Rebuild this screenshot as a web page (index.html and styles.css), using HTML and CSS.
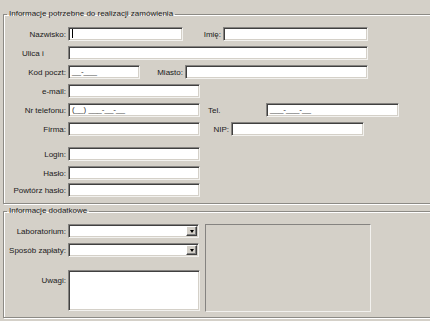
FILE: index.html
```html
<!DOCTYPE html>
<html lang="pl">
<head>
<meta charset="utf-8">
<title>Formularz zamówienia</title>
<link rel="stylesheet" href="styles.css">
</head>
<body>
<form class="form">
  <fieldset class="group group-main">
    <legend class="legend">Informacje potrzebne do realizacji zamówienia</legend>
    <div class="row">
      <label class="lbl">Nazwisko:</label>
      <div class="field w115"><span class="caret"></span></div>
      <label class="lbl lbl-imie">Imię:</label>
      <div class="field w145"></div>
    </div>
    <div class="row">
      <label class="lbl lbl-left">Ulica i</label>
      <div class="field w300"></div>
    </div>
    <div class="row">
      <label class="lbl">Kod poczt:</label>
      <div class="field w72">__-___</div>
      <label class="lbl lbl-miasto">Miasto:</label>
      <div class="field w183"></div>
    </div>
    <div class="row">
      <label class="lbl">e-mail:</label>
      <div class="field w132"></div>
    </div>
    <div class="row">
      <label class="lbl">Nr telefonu:</label>
      <div class="field w132">(__) ___-__-__</div>
      <label class="lbl lbl-tel">Tel.</label>
      <div class="field w133">___-___-__</div>
    </div>
    <div class="row">
      <label class="lbl">Firma:</label>
      <div class="field w132"></div>
      <label class="lbl lbl-nip">NIP:</label>
      <div class="field w133"></div>
    </div>
    <div class="row row-gap">
      <label class="lbl">Login:</label>
      <div class="field w132"></div>
    </div>
    <div class="row">
      <label class="lbl">Hasło:</label>
      <div class="field w132"></div>
    </div>
    <div class="row row-last">
      <label class="lbl">Powtórz hasło:</label>
      <div class="field w132"></div>
    </div>
  </fieldset>

  <fieldset class="group group-extra">
    <legend class="legend">Informacje dodatkowe</legend>
    <div class="extra">
      <div class="extra-left">
        <div class="row">
          <label class="lbl">Laboratorium:</label>
          <div class="field select w131"><span class="drop"><span class="arrow"></span></span></div>
        </div>
        <div class="row">
          <label class="lbl">Sposób zapłaty:</label>
          <div class="field select w131"><span class="drop"><span class="arrow"></span></span></div>
        </div>
        <div class="row row-notes">
          <label class="lbl lbl-top">Uwagi:</label>
          <div class="field notes w132"></div>
        </div>
      </div>
      <div class="panel"></div>
    </div>
  </fieldset>
</form>
</body>
</html>
```

FILE: styles.css
```css
html, body {
  margin: 0;
  padding: 0;
  overflow: hidden;
}
body {
  background: #d4d0c8;
  font-family: "Liberation Sans", Arial, sans-serif;
  font-size: 8px;
  color: #1a1a1a;
  width: 430px;
  height: 321px;
}
.form {
  padding: 0 0 0 3px;
}
.group {
  margin: 0;
  width: 440px;
  box-sizing: border-box;
  border: 1px solid #8c8a85;
  box-shadow: inset 1px 1px #fff, 1px 1px #fff;
  padding: 0;
}
.group-main {
  margin-top: 9px;
  height: 195px;
  padding-top: 8px;
}
.group-extra {
  margin-top: 2px;
  height: 112px;
  padding-top: 8px;
}
.legend {
  margin-left: 3px;
  padding: 0 2px;
  line-height: 10px;
  height: 10px;
}
.row {
  display: flex;
  align-items: center;
  height: 14px;
  margin-bottom: 5px;
}
.row-gap {
  margin-top: 11px;
}
.row-last {
  margin-top: -2px;
}
.lbl {
  width: 63px;
  flex: none;
  text-align: right;
  white-space: nowrap;
  padding-right: 1px;
  box-sizing: border-box;
}
.lbl-left {
  text-align: left;
  padding-left: 18px;
}
.lbl-imie { width: 39px; }
.lbl-miasto { width: 44px; }
.lbl-tel { width: 65px; text-align: left; padding-left: 8px; }
.lbl-nip { width: 30px; }
.field {
  flex: none;
  height: 14px;
  box-sizing: border-box;
  background: #fff;
  border-top: 1px solid #858380;
  border-left: 1px solid #858380;
  border-bottom: 1px solid #f2f1ee;
  border-right: 1px solid #f2f1ee;
  box-shadow: inset 1px 1px #404040, inset -1px -1px #d4d0c8;
  padding: 0 3px;
  line-height: 12px;
  color: #333;
  margin-left: 1px;
}
.caret {
  display: inline-block;
  width: 1px;
  height: 9px;
  background: #000;
  vertical-align: middle;
}
.w72 { width: 72px; }
.w115 { width: 115px; }
.w131 { width: 131px; }
.w132 { width: 132px; }
.w133 { width: 133px; }
.w145 { width: 145px; }
.w183 { width: 183px; }
.w300 { width: 300px; }
.select {
  display: flex;
  justify-content: flex-end;
  padding: 1px;
}
.drop {
  width: 11px;
  height: 10px;
  box-sizing: border-box;
  background: #d4d0c8;
  border-top: 1px solid #fff;
  border-left: 1px solid #fff;
  border-right: 1px solid #404040;
  border-bottom: 1px solid #404040;
  box-shadow: inset -1px -1px #808080;
  display: flex;
  align-items: center;
  justify-content: center;
}
.arrow {
  width: 0;
  height: 0;
  border-left: 2px solid transparent;
  border-right: 2px solid transparent;
  border-top: 3px solid #000;
}
.extra {
  display: flex;
  align-items: flex-start;
}
.extra-left {
  flex: none;
  width: 201px;
}
.row-notes {
  align-items: flex-start;
  height: 41px;
  margin-top: 13px;
}
.lbl-top {
  padding-top: 6px;
}
.notes {
  height: 41px;
}
.panel {
  flex: none;
  width: 166px;
  height: 88px;
  box-sizing: border-box;
  border-top: 1px solid #858380;
  border-left: 1px solid #858380;
  border-bottom: 1px solid #f2f1ee;
  border-right: 1px solid #f2f1ee;
}
```
